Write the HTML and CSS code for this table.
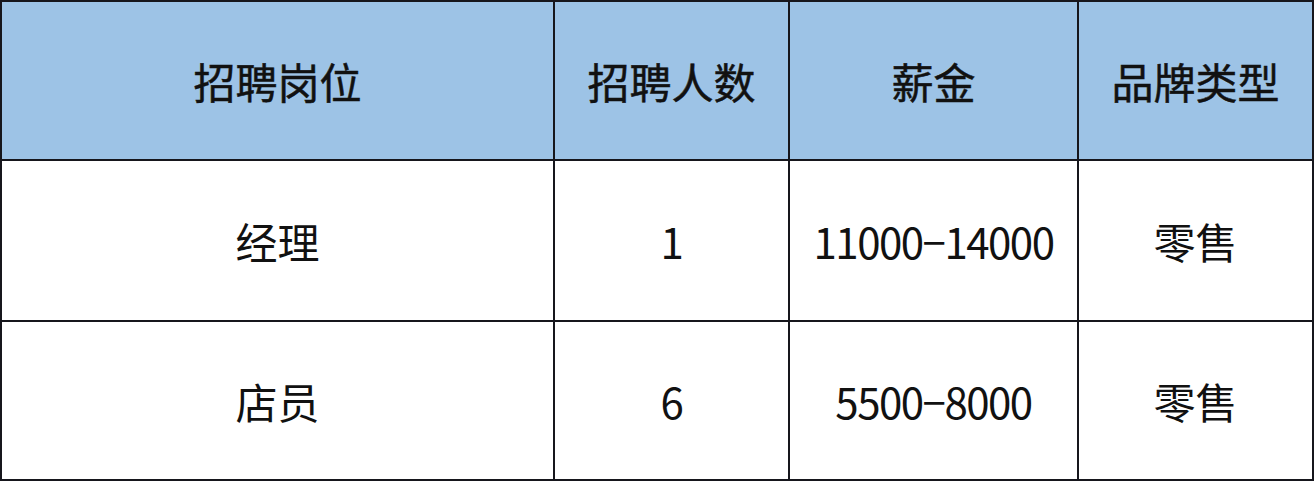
FILE: index.html
```html
<!DOCTYPE html>
<html lang="zh-CN">
<head>
<meta charset="utf-8">
<title>招聘信息</title>
<link rel="stylesheet" href="styles.css">
</head>
<body>
<div class="table">
  <div class="cell head">招聘岗位</div>
  <div class="cell head">招聘人数</div>
  <div class="cell head">薪金</div>
  <div class="cell head">品牌类型</div>

  <div class="cell">经理</div>
  <div class="cell num">1</div>
  <div class="cell num">11000−14000</div>
  <div class="cell">零售</div>

  <div class="cell">店员</div>
  <div class="cell num">6</div>
  <div class="cell num">5500−8000</div>
  <div class="cell">零售</div>
</div>
</body>
</html>
```
FILE: styles.css
```css
html, body {
  margin: 0;
  padding: 0;
  background: #ffffff;
}

.table {
  display: grid;
  grid-template-columns: 551px 233px 287px 233px;
  grid-template-rows: 157px 159px 157px;
  gap: 2px;
  padding: 2px;
  width: 1314px;
  box-sizing: border-box;
  background: #16161c;
}

.cell {
  display: flex;
  align-items: center;
  justify-content: center;
  background: #ffffff;
  color: #111111;
  font-family: "Noto Sans CJK SC", "Noto Sans", sans-serif;
  font-size: 42px;
  font-weight: 400;
}

.num {
  font-size: 42px;
  letter-spacing: -1.5px;
}

.head {
  background: #9dc3e6;
  -webkit-text-stroke: 0.5px #111111;
}
```
